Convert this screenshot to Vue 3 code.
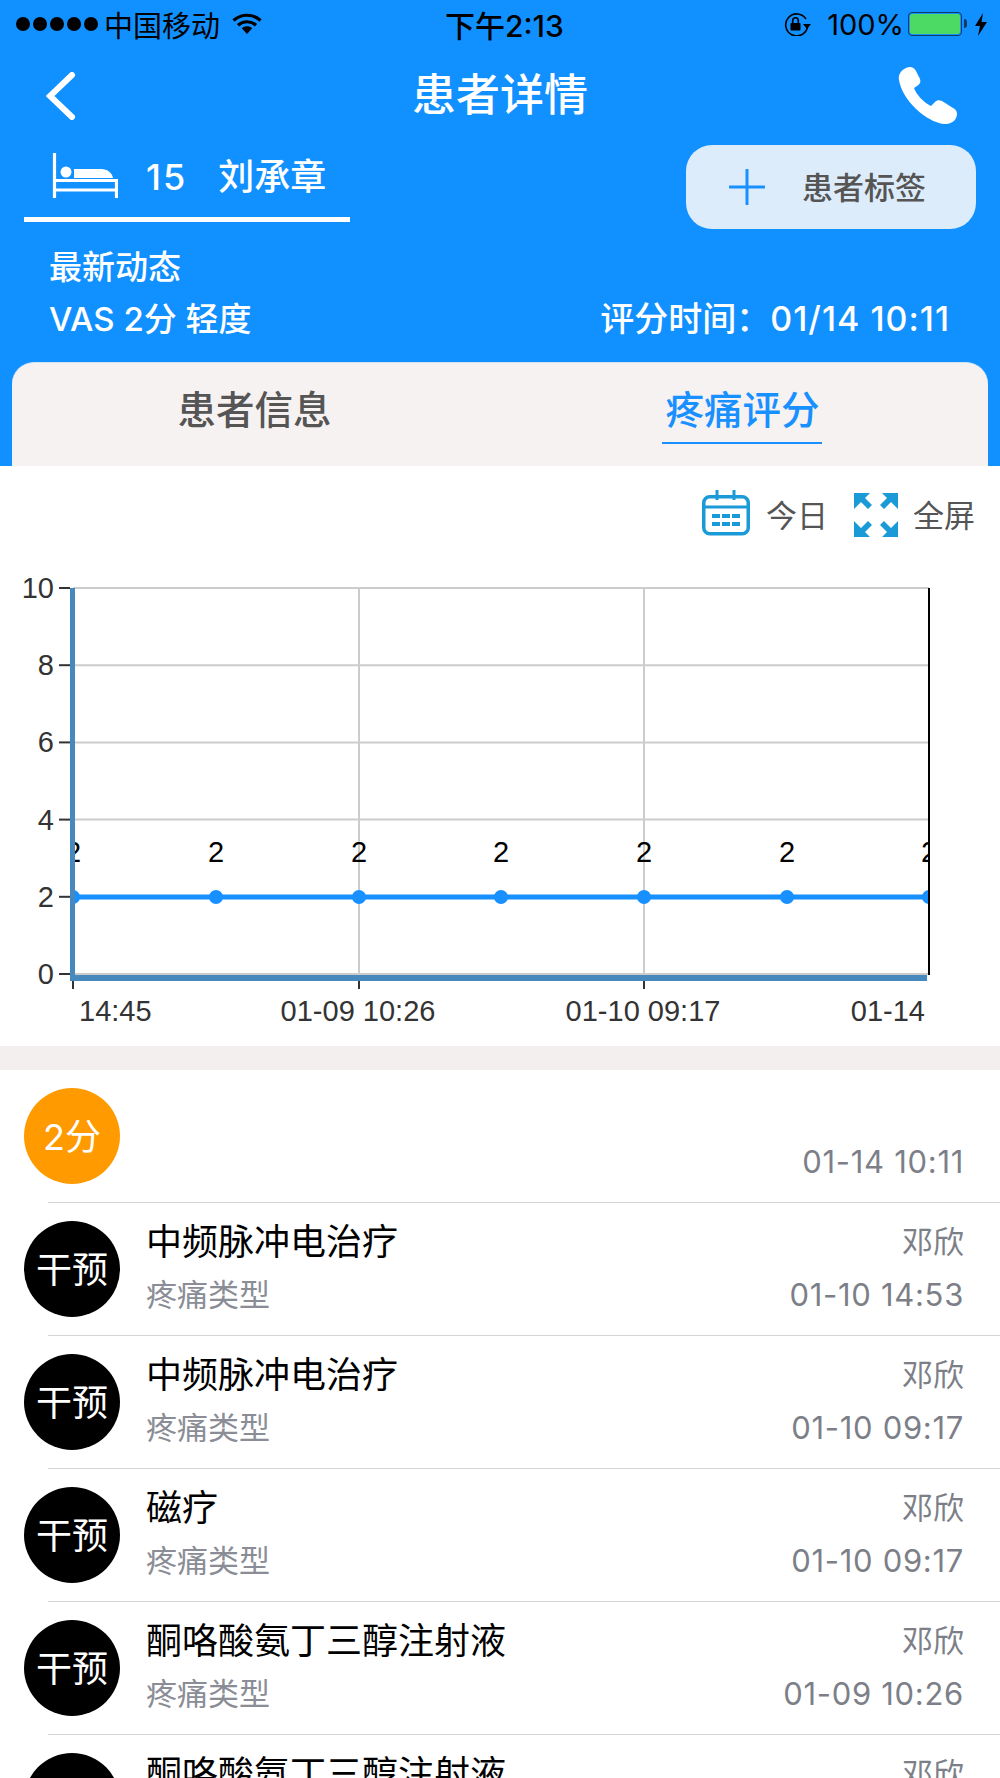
<template>
  <div class="page">
    <header class="top">
      <div class="status">
        <span class="dots"><i v-for="n in 5" :key="n"></i></span>
        <span class="carrier">中国移动</span>
        <svg class="wifi" viewBox="0 0 30 22" width="30" height="22">
          <path d="M1.5 7.5C9 .5 21 .5 28.5 7.5M6 12.2c5-4.6 13-4.6 18 0" fill="none" stroke="#000" stroke-width="3.2" />
          <path d="M9.8 15.2c3-2.6 7.4-2.6 10.4 0L15 21z" fill="#000" />
        </svg>
        <span class="clock">下午2:13</span>
        <span class="status-right">
          <svg viewBox="0 0 28 24" width="28" height="24">
            <path d="M24.5 15A11 11 0 1 1 23 7" fill="none" stroke="#000" stroke-width="1.6" />
            <path d="M20 12h8l-4 5z" fill="#000" />
            <rect x="7.5" y="11" width="10" height="7.5" rx="1" fill="#000" />
            <path d="M9.7 11V8.6a2.8 2.8 0 0 1 5.6 0V11" fill="none" stroke="#000" stroke-width="1.6" />
          </svg>
          <span class="percent">100%</span>
          <span class="battery"><b></b></span>
          <svg viewBox="0 0 14 23" width="14" height="23">
            <path d="M9 0 1 13h5l-2 10 9-14H7.500z" fill="#000" />
          </svg>
        </span>
      </div>

      <div class="nav">
        <svg class="back" viewBox="0 0 30 48" width="30" height="48">
          <path d="M26 3 4 24l22 21" fill="none" stroke="#fff" stroke-width="6" stroke-linecap="round" />
        </svg>
        <h1>患者详情</h1>
        <svg class="phone" viewBox="0 0 60 60" width="60" height="60">
          <path d="M8 2C12 0 16 1 18 5l4 8c1 3 0 5-3 7l-3 2c2 6 10 15 17 18l4-4c2-2 4-2 7-1l11 7c4 2 5 6 3 10s-6 6-12 6C28 56 4 34 1 14 0 9 3 4 8 2z" fill="#fff" />
        </svg>
      </div>

      <div class="patient">
        <div class="bed">
          <svg viewBox="0 0 66 46" width="66" height="46">
            <path d="M2.500 0v45M2 27.500h62.500v17.500M2 37h62" fill="none" stroke="#fff" stroke-width="3.200" />
            <circle cx="14" cy="19" r="5.500" fill="#fff" />
            <path d="M22 16h27c7 0 11 4 12 9H22z" fill="#fff" />
          </svg>
          <span class="bed-no">15</span>
          <span class="bed-name">刘承章</span>
        </div>
        <div class="tag-btn">
          <svg viewBox="0 0 36 36" width="36" height="36">
            <path d="M18 1v34M1 18h34" stroke="#1890ff" stroke-width="3" stroke-linecap="round" />
          </svg>
          <span>患者标签</span>
        </div>
      </div>

      <div class="latest">
        <div>最新动态</div>
        <div class="latest-row">
          <span>VAS 2分 轻度</span>
          <span class="latest-time">评分时间：<em>01/14 10:11</em></span>
        </div>
      </div>

      <div class="tabs">
        <div class="tab"><span>患者信息</span></div>
        <div class="tab active"><span>疼痛评分</span></div>
      </div>
    </header>

    <div class="tools">
      <svg viewBox="0 0 48 46" width="48" height="46">
        <rect x="1.750" y="6.750" width="44.500" height="37" rx="6" fill="none" stroke="#1a9ad6" stroke-width="3.500" />
        <path d="M2 17h44" stroke="#1a9ad6" stroke-width="3" />
        <path d="M15 0v10M32 0v10" stroke="#1a9ad6" stroke-width="3" />
        <g fill="#1a9ad6">
          <rect v-for="d in calendarDots" :key="d.x + '-' + d.y" :x="d.x" :y="d.y" width="8" height="4" />
        </g>
      </svg>
      <span class="tool-text">今日</span>
      <svg class="expand" viewBox="0 0 44 44" width="44" height="44">
        <g fill="#1a9ad6">
          <path d="M0 0H16L11 5 18 12 14 16 7 9 0 16Z" />
          <path d="M0 0H16L11 5 18 12 14 16 7 9 0 16Z" transform="translate(44 0) scale(-1 1)" />
          <path d="M0 0H16L11 5 18 12 14 16 7 9 0 16Z" transform="translate(0 44) scale(1 -1)" />
          <path d="M0 0H16L11 5 18 12 14 16 7 9 0 16Z" transform="translate(44 44) scale(-1 -1)" />
        </g>
      </svg>
      <span class="tool-text screen">全屏</span>
    </div>

    <svg class="chart" viewBox="0 560 1000 486" width="1000" height="486">
      <defs>
        <clipPath id="plot-area"><rect x="73" y="560" width="856" height="420" /></clipPath>
      </defs>
      <g stroke="#ccc" stroke-width="2">
        <line v-for="t in yTicks" :key="t.label" x1="73" x2="929" :y1="t.y" :y2="t.y" />
        <line v-for="x in xGrid" :key="x" :x1="x" :x2="x" y1="588" y2="975" />
      </g>
      <g clip-path="url(#plot-area)">
        <line x1="73" x2="929" y1="897" y2="897" stroke="#1890ff" stroke-width="5" />
        <g v-for="x in points" :key="x">
          <circle :cx="x" cy="897" r="7" fill="#1890ff" />
          <text :x="x" y="862" text-anchor="middle" class="point-label">2</text>
        </g>
      </g>
      <line x1="929" x2="929" y1="588" y2="975" stroke="#000" stroke-width="2" />
      <rect x="70" y="588" width="5" height="393" fill="#4889bd" />
      <rect x="70" y="975" width="857" height="6" fill="#4889bd" />
      <g stroke="#333" stroke-width="2">
        <line v-for="t in yTicks" :key="t.label" x1="59" x2="70" :y1="t.y" :y2="t.y" />
        <line v-for="x in xTicks" :key="x" :x1="x" :x2="x" y1="981" y2="989" />
      </g>
      <text v-for="t in yTicks" :key="t.label" x="54" :y="t.y + 10" text-anchor="end" class="axis-label">{{ t.label }}</text>
      <text x="79" y="1021" class="axis-label">14:45</text>
      <text x="358" y="1021" text-anchor="middle" class="axis-label">01-09 10:26</text>
      <text x="643" y="1021" text-anchor="middle" class="axis-label">01-10 09:17</text>
      <text x="925" y="1021" text-anchor="end" class="axis-label">01-14</text>
    </svg>

    <div class="gap"></div>

    <ul class="records">
      <li v-for="(r, i) in records" :key="i" class="record">
        <div class="badge" :class="{ score: r.score }">{{ r.badge }}</div>
        <div class="record-main">
          <div class="line name">{{ r.title }}</div>
          <div class="line sub">{{ r.sub }}</div>
        </div>
        <div class="record-side">
          <div class="line who">{{ r.who }}</div>
          <div class="line time">{{ r.time }}</div>
        </div>
      </li>
    </ul>
  </div>
</template>

<script setup>
const yTicks = [10, 8, 6, 4, 2, 0].map((v) => ({ label: v, y: 974 - v * 38.6 }))
const xGrid = [359, 644]
const xTicks = [73, 359, 644]
const points = [73, 216, 359, 501, 644, 787, 929]

const calendarDots = []
for (const y of [24, 32]) {
  for (const x of [10, 20, 30]) calendarDots.push({ x, y })
}

const records = [
  { badge: '2分', score: true, title: '', sub: '', who: '', time: '01-14 10:11' },
  { badge: '干预', title: '中频脉冲电治疗', sub: '疼痛类型', who: '邓欣', time: '01-10 14:53' },
  { badge: '干预', title: '中频脉冲电治疗', sub: '疼痛类型', who: '邓欣', time: '01-10 09:17' },
  { badge: '干预', title: '磁疗', sub: '疼痛类型', who: '邓欣', time: '01-10 09:17' },
  { badge: '干预', title: '酮咯酸氨丁三醇注射液', sub: '疼痛类型', who: '邓欣', time: '01-09 10:26' },
  { badge: '干预', title: '酮咯酸氨丁三醇注射液', sub: '疼痛类型', who: '邓欣', time: '01-09 10:26' }
]
</script>

<style>
html, body {
  margin: 0;
  background: #fff;
}
</style>

<style scoped>
.page {
  width: 1000px;
  height: 1778px;
  overflow: hidden;
  background: #fff;
  font-family: Inter, "Noto Sans CJK SC", sans-serif;
}

.top {
  background: #1190ff;
  color: #fff;
}

.status {
  height: 48px;
  display: flex;
  align-items: center;
  padding: 0 12px 0 16px;
  color: #000;
  font-size: 29px;
  position: relative;
}

.dots {
  display: flex;
  gap: 3px;
}

.dots i {
  width: 14px;
  height: 14px;
  border-radius: 50%;
  background: #000;
}

.carrier {
  margin-left: 6px;
}

.wifi {
  margin-left: 12px;
}

.clock {
  position: absolute;
  left: 445px;
  font-size: 30px;
  font-weight: 500;
}

.status-right {
  margin-left: auto;
  display: flex;
  align-items: center;
}

.percent {
  margin-left: 16px;
}

.battery {
  position: relative;
  width: 54px;
  height: 24px;
  margin-left: 4px;
  margin-right: 12px;
  padding: 1px;
  box-sizing: border-box;
  border: 1.5px solid #123a63;
  border-radius: 4px;
  display: flex;
}

.battery b {
  flex: 1;
  background: #4cd964;
  border-radius: 2px;
}

.battery::after {
  content: "";
  position: absolute;
  right: -6px;
  top: 6px;
  width: 3px;
  height: 9px;
  background: #123a63;
  border-radius: 0 3px 3px 0;
}

.nav {
  height: 97px;
  box-sizing: border-box;
  display: flex;
  align-items: center;
  justify-content: space-between;
  padding: 0 42px 2px 46px;
  position: relative;
}

.nav h1 {
  position: absolute;
  left: 0;
  right: 0;
  margin: 0 0 7px;
  text-align: center;
  font-size: 44px;
  font-weight: 500;
}

.patient {
  height: 85px;
  display: flex;
  justify-content: space-between;
  align-items: flex-start;
  padding: 0 24px;
}

.bed {
  width: 326px;
  height: 77px;
  box-sizing: border-box;
  display: flex;
  align-items: flex-start;
  border-bottom: 5px solid #fff;
  padding-left: 28px;
  padding-top: 8px;
  font-weight: 500;
}

.bed-no {
  margin-left: 28px;
  font-size: 36px;
  letter-spacing: 2px;
  line-height: 36px;
  margin-top: 6px;
}

.bed-name {
  margin-left: 31px;
  font-size: 36px;
  line-height: 36px;
  margin-top: 6px;
}

.tag-btn {
  width: 290px;
  height: 84px;
  border-radius: 26px;
  background: #ddecfa;
  display: flex;
  align-items: center;
  padding-left: 43px;
  box-sizing: border-box;
  color: #555;
  font-size: 31px;
  font-weight: 500;
}

.tag-btn span {
  margin-left: 37px;
  margin-bottom: 3px;
}

.latest {
  padding: 11px 50px 17px 49px;
  font-size: 33px;
  line-height: 52px;
  font-weight: 500;
}

.latest-row {
  display: flex;
  justify-content: space-between;
}

.latest-time {
  font-size: 34px;
}

.latest-time em {
  font-style: normal;
  letter-spacing: 1px;
}

.tabs {
  display: flex;
  height: 104px;
  margin: 0 12px;
  background: #f7f2f2;
  border-radius: 22px 22px 0 0;
  border-top: 1px solid #cfe4f7;
  box-sizing: border-box;
}

.tab {
  flex: 1;
  text-align: center;
  color: #555;
  font-size: 38.5px;
  font-weight: 500;
  line-height: 54px;
  padding: 20px 4px 0 0;
}

.tab span {
  display: inline-block;
  padding: 0 2px 0 3px;
  height: 61px;
  box-sizing: border-box;
}

.tab.active {
  color: #1890ff;
}

.tab.active span {
  border-bottom: 2px solid #1890ff;
}

.tools {
  height: 94px;
  display: flex;
  align-items: center;
  justify-content: flex-end;
  padding-right: 25px;
  color: #555;
  font-size: 31px;
}

.tool-text {
  margin-left: 16px;
}

.tool-text.screen {
  margin-left: 15px;
}

.expand {
  margin-left: 26px;
  margin-top: 4px;
}

.chart {
  display: block;
}

.axis-label {
  font-family: "Liberation Sans", Arial, sans-serif;
  font-size: 29px;
  fill: #333;
}

.point-label {
  font-family: "Liberation Sans", Arial, sans-serif;
  font-size: 29px;
  fill: #000;
}

.gap {
  height: 24px;
  background: #f4efef;
}

.records {
  list-style: none;
  margin: 0;
  padding: 0;
}

.record {
  position: relative;
  height: 133px;
  box-sizing: border-box;
  display: flex;
  align-items: flex-start;
  padding: 12px 36px 0 24px;
}

.record::after {
  content: "";
  position: absolute;
  left: 48px;
  right: 0;
  bottom: 0;
  height: 1px;
  background: #d4d4d4;
}

.badge {
  width: 96px;
  height: 96px;
  margin-top: 6px;
  padding-bottom: 5px;
  box-sizing: border-box;
  border-radius: 50%;
  background: #000;
  color: #fff;
  font-size: 36px;
  display: flex;
  align-items: center;
  justify-content: center;
  flex: none;
}

.badge.score {
  background: #ff9a00;
}

.record-main {
  margin-left: 26px;
  flex: 1;
}

.record-side {
  text-align: right;
}

.line {
  height: 53px;
  line-height: 53px;
}

.line.name {
  line-height: 55px;
  font-size: 36px;
  color: #000;
}

.sub {
  font-size: 31px;
  color: #8a8d96;
}

.who,
.time {
  font-size: 31px;
  color: #7d7f88;
}

.time {
  letter-spacing: 0.7px;
}
</style>
